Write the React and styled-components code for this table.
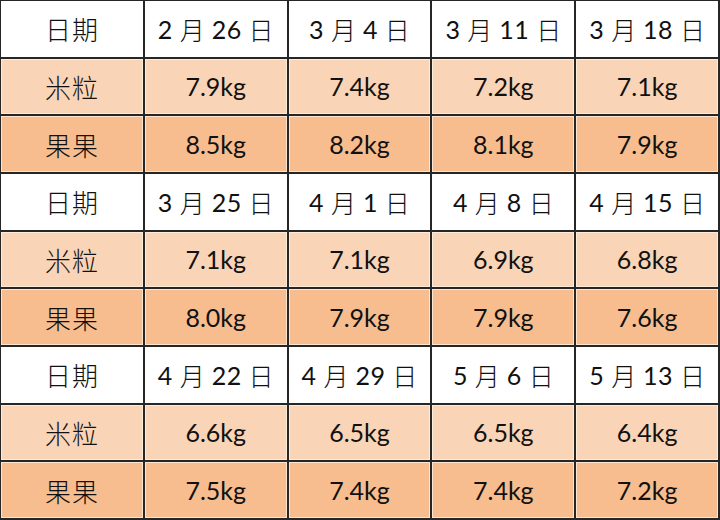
import React from 'react';
import styled, { createGlobalStyle } from 'styled-components';

const GlobalStyle = createGlobalStyle`
    html, body {
        margin: 0;
        padding: 0;
        background: #ffffff;
    }
`;

const Table = styled.div`
    width: 720px;
    height: 520px;
    box-sizing: border-box;
    display: grid;
    grid-template-columns: repeat(5, 1fr);
    grid-template-rows: repeat(9, 1fr);
    gap: 2px;
    padding: 1px 2px 2px 1px;
    background: #262626;
`;

const tones = {
    date: '#ffffff',
    mili: '#f9d4b6',
    guoguo: '#f7bd8f',
};

const Cell = styled.div`
    display: flex;
    align-items: center;
    justify-content: center;
    background: ${props => tones[props.tone]};
    box-shadow: ${props => (props.tone === 'date' ? 'none' : 'inset 0 0 0 1px rgba(255, 244, 230, 0.75)')};
    color: #111111;
    font-family: ${props => (props.label ? '"Noto Sans CJK TC", "Noto Sans CJK SC", sans-serif' : 'Lato, "Noto Sans CJK TC", sans-serif')};
    font-size: ${props => (props.label ? '26px' : '25px')};
    font-weight: ${props => (props.label ? 300 : 400)};
    letter-spacing: ${props => (props.label ? '1px' : '0')};
    white-space: pre;
`;

const DateText = styled.span`
    font-family: Lato, "Noto Sans CJK TC", sans-serif;
    font-size: 25px;
    letter-spacing: 0.5px;
`;

const Han = styled.span`
    font-family: "Noto Sans CJK TC", sans-serif;
    font-weight: 300;
    font-size: 25px;
`;

const blocks = [
    {
        dates: [['2', '26'], ['3', '4'], ['3', '11'], ['3', '18']],
        mili: ['7.9kg', '7.4kg', '7.2kg', '7.1kg'],
        guoguo: ['8.5kg', '8.2kg', '8.1kg', '7.9kg'],
    },
    {
        dates: [['3', '25'], ['4', '1'], ['4', '8'], ['4', '15']],
        mili: ['7.1kg', '7.1kg', '6.9kg', '6.8kg'],
        guoguo: ['8.0kg', '7.9kg', '7.9kg', '7.6kg'],
    },
    {
        dates: [['4', '22'], ['4', '29'], ['5', '6'], ['5', '13']],
        mili: ['6.6kg', '6.5kg', '6.5kg', '6.4kg'],
        guoguo: ['7.5kg', '7.4kg', '7.4kg', '7.2kg'],
    },
];

function DateCell({ month, day }) {
    return (
        <Cell tone="date">
            <DateText>{month} </DateText>
            <Han>月</Han>
            <DateText> {day} </DateText>
            <Han>日</Han>
        </Cell>
    );
}

export default function App() {
    return (
        <>
            <GlobalStyle />
            <Table>
                {blocks.map((b, i) => (
                    <React.Fragment key={i}>
                        <Cell tone="date" label>日期</Cell>
                        {b.dates.map(([m, d]) => <DateCell key={m + d} month={m} day={d} />)}
                        <Cell tone="mili" label>米粒</Cell>
                        {b.mili.map((v, j) => <Cell key={j} tone="mili">{v}</Cell>)}
                        <Cell tone="guoguo" label>果果</Cell>
                        {b.guoguo.map((v, j) => <Cell key={j} tone="guoguo">{v}</Cell>)}
                    </React.Fragment>
                ))}
            </Table>
        </>
    );
}
